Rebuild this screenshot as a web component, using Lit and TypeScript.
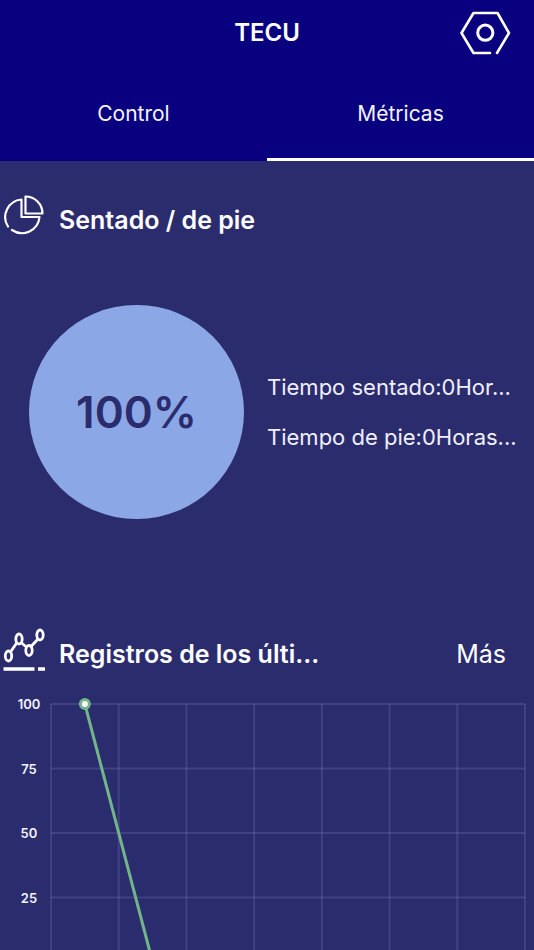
import { LitElement, html, svg, css } from "lit";
import { customElement, property, state } from "lit/decorators.js";
import { classMap } from "lit/directives/class-map.js";

const gearIcon = html`
  <svg class="icon" viewBox="0 0 52 46" width="52" height="46" fill="none" stroke="currentColor" stroke-width="3" stroke-linecap="round" stroke-linejoin="round" aria-hidden="true">
    <path d="M31 43H14.500L2.500 23 14.500 3H38.500L50 23 38 43" stroke-width="2.600" />
    <circle cx="26.300" cy="22.700" r="7.600" />
  </svg>`;

const pieIcon = html`
  <svg viewBox="0 0 42 42" width="42" height="42" fill="none" stroke="currentColor" stroke-width="2.200" stroke-linecap="round" stroke-linejoin="round" aria-hidden="true">
    <path d="M5 31.500A17.600 17.600 0 0 1 18.500 4.500V22H36.500A17.600 17.600 0 0 1 9 35" />
    <path d="M22.500 1.500V18.500H39.500A17 17 0 0 0 22.500 1.500Z" />
  </svg>`;

const recordsIcon = html`
  <svg viewBox="0 0 42 44" width="42" height="44" fill="none" stroke="currentColor" stroke-width="2.800" aria-hidden="true">
    <ellipse cx="5.500" cy="28" rx="3.200" ry="5" />
    <ellipse cx="16" cy="11" rx="3.200" ry="5" />
    <ellipse cx="26" cy="22.500" rx="3.200" ry="5" />
    <ellipse cx="37" cy="7" rx="3.200" ry="5" />
    <path d="M7.500 24L14 14.500M18 14.500L24 19.500M28 18.500L35 11" />
    <path d="M0.500 41H31.500M35 41H42" stroke-width="3.400" />
  </svg>`;

@customElement("percent-disc")
class PercentDisc extends LitElement {
  @property({ type: Number }) value = 0;

  static styles = css`
    :host {
      display: grid;
      place-items: center;
      box-sizing: border-box;
      width: 82%;
      aspect-ratio: 1;
      border-radius: 50%;
      background: #8ba7e6;
      color: #2b2c6e;
      font-size: 44px;
      font-weight: 600;
      line-height: 56px;
    }
  `;

  render() {
    return html`<span>${this.value}%</span>`;
  }
}

@customElement("line-chart")
class LineChart extends LitElement {
  @property({ attribute: false }) values: number[] = [];

  static styles = css`
    :host {
      display: block;
    }
    .chart {
      display: block;
      width: 100%;
    }
    .grid {
      stroke: #8c8fd0;
      stroke-opacity: 0.22;
      stroke-width: 2;
    }
    .label {
      fill: #f2f2fa;
      font-size: 13px;
      font-weight: 600;
      text-anchor: middle;
    }
    .line {
      fill: none;
      stroke: #72b58b;
      stroke-width: 3;
    }
    .dot {
      fill: #fff;
      stroke: #72b58b;
      stroke-width: 3;
    }
  `;

  render() {
    const left = 51;
    const top = 14;
    const width = 474;
    const height = 258;
    const columns = 7;
    const x = (i: number) => left + (i * width) / columns;
    const y = (v: number) => top + height * (1 - v / 100);
    const points = this.values.map((v, i) => [x(i + 0.5), y(v)]);
    return html`
      <svg class="chart" viewBox="0 0 534 300" role="img" aria-label="Registros">
        ${[100, 75, 50, 25].map(
          (v) => svg`
            <line class="grid" x1=${left} x2=${left + width} y1=${y(v)} y2=${y(v)} />
            <text class="label" x="29" y=${y(v) + 5}>${v}</text>`
        )}
        ${Array.from({ length: columns + 1 }, (_, i) => svg`
          <line class="grid" x1=${x(i)} x2=${x(i)} y1=${top} y2=${top + height} />`)}
        <line class="grid" x1=${left} x2=${left + width} y1=${y(0)} y2=${y(0)} />
        <polyline class="line" points=${points.map((p) => p.join(",")).join(" ")} />
        ${points.map(([cx, cy]) => svg`<circle class="dot" cx=${cx} cy=${cy} r="4.500" />`)}
      </svg>`;
  }
}

@customElement("app-root")
class AppRoot extends LitElement {
  @state() private tab = "Métricas";

  static styles = css`
    :host {
      display: flex;
      flex-direction: column;
      height: 100vh;
      overflow: hidden;
      background: #2b2c6e;
      color: #fff;
      font-family: Inter, "Liberation Sans", sans-serif;
    }
    button {
      margin: 0;
      padding: 0;
      border: 0;
      background: none;
      color: inherit;
      font: inherit;
      cursor: pointer;
    }
    h1,
    h2,
    p {
      margin: 0;
    }
    .header {
      flex: none;
      background: #08007f;
    }
    .bar {
      display: grid;
      grid-template-columns: 1fr auto 1fr;
      align-items: center;
      height: 66px;
      padding: 0 23px;
    }
    .title {
      grid-column: 2;
      font-size: 24px;
      font-weight: 600;
      line-height: 32px;
    }
    .settings {
      justify-self: end;
      height: 46px;
    }
    .icon {
      display: block;
    }
    .tabs {
      display: grid;
      grid-template-columns: 1fr 1fr;
    }
    .tab {
      box-sizing: border-box;
      height: 95px;
      border-top: 3px solid transparent;
      border-bottom: 3px solid transparent;
      font-size: 21px;
      color: #f4f4fc;
    }
    .active {
      border-bottom-color: #fff;
    }
    .section-head {
      display: flex;
      align-items: center;
      gap: 14px;
      height: 48px;
      padding: 0 28px 0 3px;
    }
    .posture-head {
      margin-top: 31px;
    }
    .section-head svg {
      flex: none;
    }
    .heading {
      font-size: 25px;
      font-weight: 600;
      line-height: 32px;
      padding-top: 8px;
      white-space: nowrap;
    }
    .more {
      margin-left: auto;
      padding-top: 8px;
      font-size: 25px;
      line-height: 32px;
    }
    .posture {
      display: grid;
      grid-template-columns: 1fr 1fr;
      align-items: center;
      height: 344px;
      padding-bottom: 42px;
    }
    .disc-cell {
      display: grid;
      place-items: center;
      padding-left: 6px;
    }
    .times {
      display: grid;
      gap: 18px;
      min-width: 0;
    }
    .time {
      font-size: 22px;
      line-height: 32px;
      color: #f0f0fa;
      white-space: nowrap;
    }
    .chart-area {
      margin-top: 16px;
    }
  `;

  render() {
    return html`
      <header class="header">
        <div class="bar">
          <h1 class="title">TECU</h1>
          <button class="settings" aria-label="Ajustes">${gearIcon}</button>
        </div>
        <nav class="tabs" role="tablist">
          ${["Control", "Métricas"].map(
            (name) => html`
              <button
                role="tab"
                aria-selected=${this.tab === name}
                class=${classMap({ tab: true, active: this.tab === name })}
                @click=${() => (this.tab = name)}
              >${name}</button>`
          )}
        </nav>
      </header>
      <main>
        <section>
          <div class="section-head posture-head">
            ${pieIcon}
            <h2 class="heading">Sentado / de pie</h2>
          </div>
          <div class="posture">
            <div class="disc-cell"><percent-disc .value=${100}></percent-disc></div>
            <div class="times">
              <p class="time">Tiempo sentado:0Hor...</p>
              <p class="time">Tiempo de pie:0Horas...</p>
            </div>
          </div>
        </section>
        <section>
          <div class="section-head">
            ${recordsIcon}
            <h2 class="heading">Registros de los últi...</h2>
            <button class="more">Más</button>
          </div>
          <line-chart class="chart-area" .values=${[100, 0]}></line-chart>
        </section>
      </main>
    `;
  }
}
